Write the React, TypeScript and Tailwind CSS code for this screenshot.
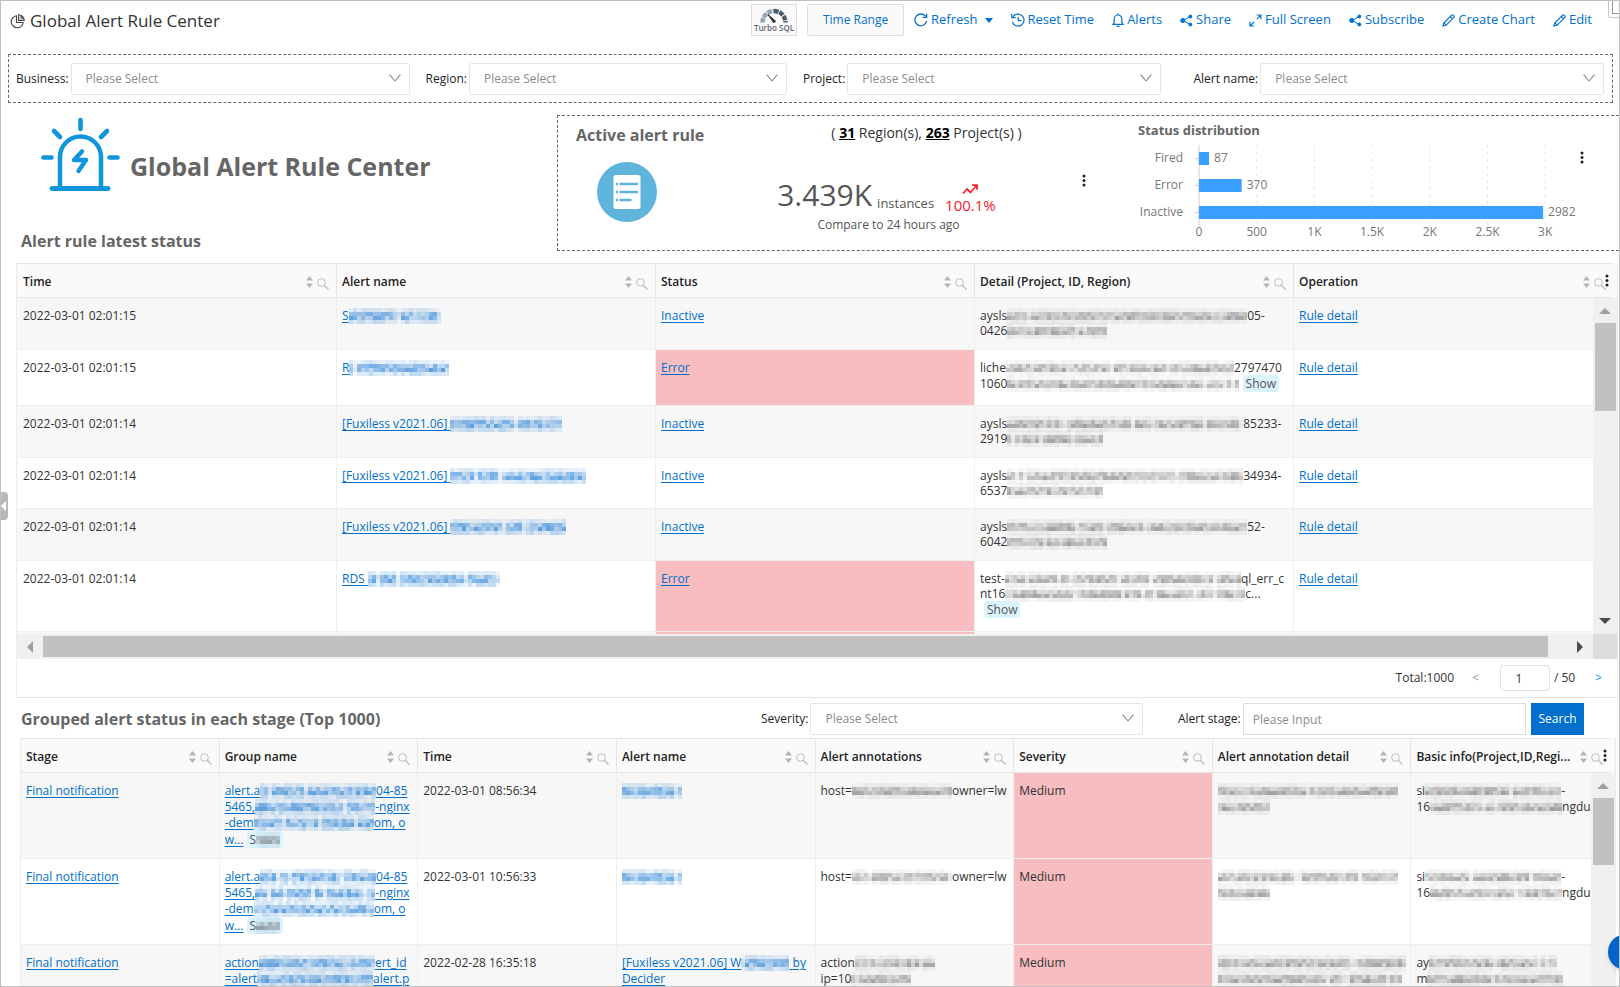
import { useState, type ReactNode } from "react";

type Tone = "blue" | "gray";

/* Masked text: a small grid of 4px cells, darker around the x-height */
function Masked({ w, tone = "gray", seed = 1 }: { w: number; tone?: Tone; seed?: number }) {
  const cols = Math.round(w / 4);
  const bands = tone === "blue" ? [0.14, 0.42, 0.5, 0.2] : [0.06, 0.28, 0.36, 0.07];
  const fill = tone === "blue" ? "#1677d2" : "#4a4a4a";
  let state = seed * 7919 + 17;
  const next = () => {
    state = (state * 1103515245 + 12345) % 2147483648;
    return state / 2147483648;
  };
  const cells: ReactNode[] = [];
  for (let x = 0; x < cols; x++) {
    const gap = next() < 0.06 ? 0.4 : 1;
    for (let y = 0; y < 4; y++) {
      const opacity = bands[y] * gap * (0.5 + next() * 0.9);
      cells.push(
        <rect key={`${x}-${y}`} x={x * 4} y={y * 4} width={4} height={4} fill={fill} opacity={opacity.toFixed(2)} />,
      );
    }
  }
  return (
    <svg
      className="inline-block align-baseline -mb-1 max-w-none"
      width={cols * 4}
      height={16}
      shapeRendering="crispEdges"
      aria-hidden="true"
    >
      {cells}
    </svg>
  );
}

function Link({ children }: { children: ReactNode }) {
  return (
    <a href="#" className="text-[#0070cc] underline underline-offset-2">
      {children}
    </a>
  );
}

function Show({ children = "Show" }: { children?: ReactNode }) {
  return (
    <button className="inline-block h-[17px] px-[3px] leading-[17px] rounded-sm bg-[#dbf2ff] text-[#555]">
      {children}
    </button>
  );
}

function SortIcon() {
  return (
    <svg width="7" height="12" viewBox="0 0 7 12" fill="#b3b3b3">
      <path d="M3.5 0 7 4.5H0zM3.5 12 7 7.5H0z" />
    </svg>
  );
}

function SearchIcon() {
  return (
    <svg width="12" height="12" viewBox="0 0 12 12" fill="none" stroke="#bdbdbd" className="mt-1">
      <circle cx="4.5" cy="4.5" r="3.8" />
      <path d="M7.3 7.3 11.5 11.5" strokeWidth="1.3" />
    </svg>
  );
}

function Dots() {
  return (
    <svg width="4" height="13" viewBox="0 0 4 13" fill="#222">
      <circle cx="2" cy="2" r="1.5" />
      <circle cx="2" cy="6.5" r="1.5" />
      <circle cx="2" cy="11" r="1.5" />
    </svg>
  );
}

function Triangle({ dir, dark }: { dir: "up" | "down" | "left" | "right"; dark?: boolean }) {
  const paths = {
    up: "M6 3 12 9H0z",
    down: "M6 9 0 3h12z",
    left: "M3 6 9 0v12z",
    right: "M9 6 3 0v12z",
  };
  return (
    <svg width="12" height="12" viewBox="0 0 12 12" fill={dark ? "#4a4a4a" : "#a0a0a0"}>
      <path d={paths[dir]} />
    </svg>
  );
}

function SelectBox({ id, label }: { id: string; label: string }) {
  return (
    <>
      <label htmlFor={id} className="whitespace-nowrap text-[#222]">
        {label}:
      </label>
      <div className="relative flex-1 ml-[2px]">
        <select
          id={id}
          className="w-full h-8 pl-[14px] pr-8 appearance-none border border-[#e6e6e6] rounded-xs bg-white text-[#8c8c8c] outline-none"
        >
          <option>Please Select</option>
        </select>
        <svg
          className="absolute right-[9px] top-[11px] pointer-events-none"
          width="12"
          height="8"
          viewBox="0 0 12 8"
          fill="none"
          stroke="#888"
          strokeWidth="1.1"
        >
          <path d="M.6.6 6 7 11.4.6" />
        </svg>
      </div>
    </>
  );
}

function HeaderCell({ title, last }: { title: string; last?: boolean }) {
  return (
    <th
      className={`h-[35px] pt-0.5 pl-[5px] pr-[7px] text-left font-semibold text-[#222] border-y border-[#e5e5e5] ${last ? "" : "border-r"}`}
    >
      <div className="flex items-center gap-1">
        <span className="flex-1 whitespace-nowrap">{title}</span>
        <SortIcon />
        <SearchIcon />
      </div>
    </th>
  );
}

const cell = "pt-2.5 pl-[5px] align-top border-b border-r border-[#efefef] whitespace-nowrap";

/* Toolbar icons */
const RefreshIcon = (
  <svg width="14" height="14" viewBox="0 0 14 14" fill="none" stroke="#0070cc" strokeWidth="1.3">
    <path d="M12.6 8.2A5.9 5.9 0 1 1 11.6 3.4" />
    <path d="M12.6.8v3.6H8.8" />
  </svg>
);
const ResetIcon = (
  <svg width="14" height="14" viewBox="0 0 14 14" fill="none" stroke="#0070cc" strokeWidth="1.2">
    <path d="M1.6 4.6A6 6 0 1 1 1.4 9" />
    <path d="M.8.8v3.9h3.9M7.2 3.8v3.8h3.2" />
  </svg>
);
const BellIcon = (
  <svg width="12" height="14" viewBox="0 0 12 14" fill="none" stroke="#0070cc" strokeWidth="1.2">
    <path d="M1 11.4h10L9.8 9.6V5.8a3.8 3.8 0 0 0-7.6 0v3.8zM4.5 13.3h3M6 .2v1.8" />
  </svg>
);
const ShareIcon = (
  <svg width="13" height="13" viewBox="0 0 13 13" fill="#0070cc" stroke="#0070cc">
    <path d="M10.2 2.6 3 6.5l7.2 3.9" fill="none" />
    <circle cx="2.8" cy="6.5" r="2.1" />
    <circle cx="10.3" cy="2.5" r="1.5" />
    <circle cx="10.3" cy="10.5" r="1.5" />
  </svg>
);
const FullIcon = (
  <svg width="13" height="13" viewBox="0 0 13 13" fill="none" stroke="#0070cc" strokeWidth="1.2">
    <path d="M7.6 1h4.3v4.3M11.9 1 7.8 5.1M5.3 12H1V7.7M1 12l4.1-4.1" />
  </svg>
);
const PencilIcon = (
  <svg width="13" height="13" viewBox="0 0 13 13" fill="none" stroke="#0070cc" strokeWidth="1.1">
    <path d="M.9 12.1 1.7 9 9.6 1.1a1 1 0 0 1 1.4 0l.9.9a1 1 0 0 1 0 1.4L4 11.3zM8.2 2.5l2.3 2.3M2 8.8l2.2 2.3" />
  </svg>
);

const toolbar = [
  { name: "Reset Time", icon: ResetIcon },
  { name: "Alerts", icon: BellIcon },
  { name: "Share", icon: ShareIcon },
  { name: "Full Screen", icon: FullIcon },
  { name: "Subscribe", icon: ShareIcon },
  { name: "Create Chart", icon: PencilIcon },
  { name: "Edit", icon: PencilIcon },
];

function Header() {
  return (
    <header className="flex items-start h-[53px] pt-[3px] pl-[9px] pr-[27px]">
      <h1 className="flex flex-1 items-center h-[34px] gap-[5px] text-[17px] text-[#333]">
        <svg width="15" height="15" viewBox="0 0 15 15" fill="none" stroke="#444" strokeWidth="1.1">
          <path d="M6.5 1.8A6 6 0 1 0 13.2 8.5H6.5z" />
          <path d="M8.6.8v5.6h5.6A5.6 5.6 0 0 0 8.6.8zM11 1.5v2.6h2.6" />
        </svg>
        Global Alert Rule Center
      </h1>
      <div className="flex items-start text-[13px] text-[#0070cc]">
        <button
          aria-label="Turbo SQL"
          className="flex flex-col items-center w-[46px] h-8 pt-[3px] border border-[#ddd] bg-[#fafafa]"
        >
          <svg width="28" height="15" viewBox="0 0 28 15" fill="none">
            <path d="M2.5 14.5a11.5 11.5 0 0 1 11.500-11.500" stroke="#8fa0ae" strokeWidth="4.4" strokeDasharray="4.6 .9" />
            <path d="M14 3a11.5 11.5 0 0 1 11.500 11.500" stroke="#4b5b69" strokeWidth="4.4" strokeDasharray="4.6 .9" />
            <path d="M8 6.5 13.6 14.8l2-1.6z" fill="#333" stroke="#333" />
          </svg>
          <span className="text-[8px] leading-[9px] font-semibold text-[#667]">Turbo SQL</span>
        </button>
        <button className="w-[97px] h-8 ml-2.5 text-xs border border-[#ddd] rounded-xs bg-[#fafafa]">Time Range</button>
        <button className="flex items-center h-8 gap-[3px] ml-2.5">
          {RefreshIcon}
          Refresh
          <svg className="ml-1" width="8" height="5" viewBox="0 0 8 5" fill="#0070cc">
            <path d="M0 0h8L4 5z" />
          </svg>
        </button>
        <nav className="flex gap-[18px] ml-[18px]">
          {toolbar.map((item) => (
            <button key={item.name} className="flex items-center h-8 gap-[3px] whitespace-nowrap">
              {item.icon}
              {item.name}
            </button>
          ))}
        </nav>
      </div>
    </header>
  );
}

function Filters() {
  return (
    <section className="flex items-center h-[49px] ml-[7px] mr-[6px] pl-[7px] pr-2 gap-4 border border-dashed border-[#666]">
      <div className="flex items-center flex-[393]">
        <SelectBox id="business" label="Business" />
      </div>
      <div className="flex items-center flex-[361]">
        <SelectBox id="region" label="Region" />
      </div>
      <div className="flex items-center flex-[358]">
        <SelectBox id="project" label="Project" />
      </div>
      <div className="flex items-center flex-[410] ml-4">
        <SelectBox id="alert-name" label="Alert name" />
      </div>
    </section>
  );
}

const distribution = [
  { name: "Fired", value: 87 },
  { name: "Error", value: 370 },
  { name: "Inactive", value: 2982 },
];
const ticks = ["0", "500", "1K", "1.5K", "2K", "2.5K", "3K"];

function StatusChart() {
  return (
    <svg className="mt-[2px]" width="440" height="100" viewBox="0 0 440 100" fontSize="12" fill="#777">
      {ticks.map((tick, i) => (
        <g key={tick}>
          <line
            x1={61 + i * 57.7}
            x2={61 + i * 57.7}
            y1="4"
            y2="84"
            stroke={i === 0 ? "#d0d0d0" : "#e6e6e6"}
            strokeDasharray={i === 0 ? undefined : "3 4"}
          />
          <text x={61 + i * 57.7} y="95" textAnchor="middle">
            {tick}
          </text>
        </g>
      ))}
      {distribution.map((row, i) => {
        const width = (row.value / 500) * 57.7;
        return (
          <g key={row.name}>
            <text x="45" y={21 + i * 27} textAnchor="end">
              {row.name}
            </text>
            <line x1="57" x2="61" y1={17.5 + i * 27} y2={17.5 + i * 27} stroke="#ccc" />
            <rect x="61" y={11 + i * 27} width={width} height="13" fill="#3aa0ff" />
            <text x={66 + width} y={21 + i * 27}>
              {row.value}
            </text>
          </g>
        );
      })}
    </svg>
  );
}

function Overview() {
  return (
    <section className="flex h-[136px] mt-3">
      <div className="flex flex-col justify-between shrink-0 w-[556px] pl-5">
        <div className="flex items-end gap-2.5 pl-5 pt-[2px]">
          <svg width="79" height="74" viewBox="0 0 79 74" fill="none" stroke="#1296db" strokeLinecap="round">
            <path d="M19 71V40a20.500 20.500 0 0 1 41 0v31" strokeWidth="4.500" />
            <path d="M11 71.500h56" strokeWidth="4.800" />
            <path d="M39.500 3v9M13 14l6 6M66 14l-6 6M2.500 40.500h8M68.500 40.500h8" strokeWidth="4.600" />
            <path d="M41 34.500 33 43h12l-7.500 11" strokeWidth="4.500" strokeLinejoin="round" />
          </svg>
          <h2 className="pb-2 text-[25px] font-bold text-[#666] whitespace-nowrap">Global Alert Rule Center</h2>
        </div>
        <h3 className="text-base leading-5 font-bold text-[#666]">Alert rule latest status</h3>
      </div>

      <div className="flex flex-1 border border-r-0 border-dashed border-[#666]">
        <div className="w-[212px] pl-[18px] pt-[7px]">
          <h3 className="text-base font-bold text-[#666]">Active alert rule</h3>
          <svg className="mt-[15px] ml-[21px]" width="60" height="60" viewBox="0 0 60 60">
            <circle cx="30" cy="30" r="30" fill="#5fb4dc" />
            <rect x="16.500" y="13" width="27" height="34" rx="2.500" fill="#fff" />
            <path d="M22.500 22H41M22.500 30H41M22.500 38H34.500" stroke="#5fb4dc" strokeWidth="2.600" />
            <path d="M19 22h2M19 30h2M19 38h2" stroke="#5fb4dc" strokeWidth="2.600" />
          </svg>
        </div>
        <div className="flex flex-col items-center w-[233px] text-[#555]">
          <p className="ml-20 mt-[7px] text-sm text-[#333] whitespace-nowrap">
            ( <b className="text-black underline">31</b> Region(s), <b className="text-black underline">263</b>{" "}
            Project(s) )
          </p>
          <div className="flex items-end gap-[5px] mt-8 whitespace-nowrap">
            <span className="text-3xl leading-10">3.439K</span>
            <span className="pb-[3px] text-[13px]">instances</span>
            <span className="flex flex-col items-center pl-1.5 text-[#f5222d] text-[15px] leading-5">
              <svg width="16" height="11" viewBox="0 0 16 11" fill="none" stroke="#f5222d" strokeWidth="1.800">
                <path d="M1 9.500 5 5l3.500 3.500L14.500 1.500M10 1.200h5v4.500" />
              </svg>
              100.1%
            </span>
          </div>
          <p className="pl-1 pt-0.5">Compare to 24 hours ago</p>
        </div>
        <div className="pt-[58px] pl-[79px]">
          <Dots />
        </div>
        <div className="flex-1 pl-[52px] pt-[6px]">
          <h3 className="text-[13px] font-bold text-[#666]">Status distribution</h3>
          <StatusChart />
        </div>
        <div className="pt-[35px] pr-[35px]">
          <Dots />
        </div>
      </div>
    </section>
  );
}

const alertRows = [
  {
    time: "2022-03-01 02:01:15",
    h: "h-[52px]",
    name: <>S<Masked w={92} tone="blue" seed={3} /></>,
    status: "Inactive",
    detail: <>aysls<Masked w={240} seed={11} />05-<br />0426<Masked w={100} seed={12} /></>,
  },
  {
    time: "2022-03-01 02:01:15",
    h: "h-[56px]",
    name: <>R<Masked w={100} tone="blue" seed={4} /></>,
    status: "Error",
    detail: <>liche<Masked w={228} seed={13} />2797470<br />1060<Masked w={232} seed={14} /> <Show /></>,
  },
  {
    time: "2022-03-01 02:01:14",
    h: "h-[52px]",
    name: <>[Fuxiless v2021.06] <Masked w={112} tone="blue" seed={5} /></>,
    status: "Inactive",
    detail: <>aysls<Masked w={236} seed={15} />85233-<br />2919<Masked w={96} seed={16} /></>,
  },
  {
    time: "2022-03-01 02:01:14",
    h: "h-[51px]",
    name: <>[Fuxiless v2021.06] <Masked w={136} tone="blue" seed={6} /></>,
    status: "Inactive",
    detail: <>aysls<Masked w={236} seed={17} />34934-<br />6537<Masked w={96} seed={18} /></>,
  },
  {
    time: "2022-03-01 02:01:14",
    h: "h-[52px]",
    name: <>[Fuxiless v2021.06] <Masked w={116} tone="blue" seed={7} /></>,
    status: "Inactive",
    detail: <>aysls<Masked w={240} seed={19} />52-<br />6042<Masked w={100} seed={20} /></>,
  },
  {
    time: "2022-03-01 02:01:14",
    h: "h-[71px]",
    name: <>RDS <Masked w={132} tone="blue" seed={8} /></>,
    status: "Error",
    detail: <>test-<Masked w={236} seed={21} />ql_err_c<br />nt16<Masked w={240} seed={22} />c...<br /><span className="pl-1"><Show /></span></>,
  },
];

function AlertTable() {
  const [page, setPage] = useState("1");

  return (
    <section className="mt-3 ml-[15px] mr-px border-x border-[#ececec]">
      <div className="relative h-[371px] overflow-hidden bg-[#fafafa]">
        <div className="ml-px mr-[4px]">
          <table className="w-full table-fixed border-separate border-spacing-0 leading-[15px]">
            <thead>
              <tr>
                <HeaderCell title="Time" />
                <HeaderCell title="Alert name" />
                <HeaderCell title="Status" />
                <HeaderCell title="Detail (Project, ID, Region)" />
                <HeaderCell title="Operation" last />
              </tr>
            </thead>
            <tbody>
              {alertRows.map((row, i) => (
                <tr key={i} className={`${row.h} ${i % 2 === 0 ? "bg-[#f7f7f7]" : "bg-white"}`}>
                  <td className={cell}>{row.time}</td>
                  <td className={cell}>
                    <Link>{row.name}</Link>
                  </td>
                  <td className={`${cell} ${row.status === "Error" ? "bg-[#f7bdc1]" : ""}`}>
                    <Link>{row.status}</Link>
                  </td>
                  <td className={cell}>{row.detail}</td>
                  <td className={cell}>
                    <Link>Rule detail</Link>
                  </td>
                </tr>
              ))}
              <tr className="h-[52px] bg-[#f7f7f7]">
                <td className={cell} />
                <td className={cell} />
                <td className={`${cell} bg-[#f7bdc1]`} />
                <td className={cell} />
                <td className={cell} />
              </tr>
            </tbody>
          </table>
        </div>
        <div className="absolute right-[8px] top-[11px]">
          <Dots />
        </div>
        {/* Vertical scrollbar */}
        <div className="absolute right-0 top-[35px] bottom-0 flex flex-col items-center w-6 py-[7px] bg-[#f0f0f0]">
          <Triangle dir="up" />
          <div className="w-[21px] h-[88px] mt-[6px] mb-auto bg-[#c1c1c1]" />
          <Triangle dir="down" dark />
        </div>
      </div>
      {/* Horizontal scrollbar */}
      <div className="flex h-[25px] bg-[#f0f0f0]">
        <div className="flex items-center flex-1 pl-[7px] pr-[7px]">
          <Triangle dir="left" />
          <div className="flex-1 h-[21px] ml-[7px] mr-[26px] bg-[#c1c1c1]" />
          <Triangle dir="right" dark />
        </div>
        <div className="w-6 bg-[#dcdcdc]" />
      </div>
      <div className="flex items-center justify-end h-[39px] pr-[15px] border-b border-[#e5e5e5]">
        <span>Total:1000</span>
        <button className="ml-[18px] text-[#999]" aria-label="Previous page">
          &lt;
        </button>
        <input
          aria-label="Page"
          value={page}
          onChange={(e) => setPage(e.target.value)}
          className="w-[50px] h-[26px] ml-[21px] pr-3 text-center border border-[#e0e0e0] rounded-sm outline-none"
        />
        <span className="ml-1">/ 50</span>
        <button className="ml-5 text-[#1890ff]" aria-label="Next page">
          &gt;
        </button>
      </div>
    </section>
  );
}

function GroupName({ seed }: { seed: number }) {
  return (
    <>
      <Link>
        alert.a<Masked w={116} tone="blue" seed={seed} />04-85
        <br />
        5465,<Masked w={120} tone="blue" seed={seed + 1} />-nginx
        <br />
        -dem<Masked w={120} tone="blue" seed={seed + 2} />om, o
        <br />
        w...
      </Link>{" "}
      <Show>
        S<Masked w={24} seed={seed + 3} />
      </Show>
    </>
  );
}

const groupRows = [
  {
    time: "2022-03-01 08:56:34",
    group: <GroupName seed={31} />,
    name: <Masked w={60} tone="blue" seed={36} />,
    annotations: <>host=<Masked w={100} seed={37} />owner=lw</>,
    detail: <><Masked w={180} seed={38} /><br /><Masked w={52} seed={39} /></>,
    info: <>si<Masked w={136} seed={40} />-<br />16<Masked w={132} seed={41} />ngdu</>,
  },
  {
    time: "2022-03-01 10:56:33",
    group: <GroupName seed={51} />,
    name: <Masked w={60} tone="blue" seed={36} />,
    annotations: <>host=<Masked w={100} seed={57} />owner=lw</>,
    detail: <><Masked w={180} seed={58} /><br /><Masked w={52} seed={59} /></>,
    info: <>si<Masked w={136} seed={60} />-<br />16<Masked w={132} seed={61} />ngdu</>,
  },
  {
    time: "2022-02-28 16:35:18",
    group: <Link>action<Masked w={116} tone="blue" seed={71} />ert_id<br />=alert<Masked w={116} tone="blue" seed={72} />alert.p</Link>,
    name: <Link>[Fuxiless v2021.06] W<Masked w={48} tone="blue" seed={73} /> by<br />Decider</Link>,
    annotations: <>action<Masked w={80} seed={74} /><br />ip=10<Masked w={60} seed={75} /></>,
    detail: <><Masked w={188} seed={76} /><br /><Masked w={184} seed={77} /></>,
    info: <>ay<Masked w={128} seed={78} /><br />m<Masked w={136} seed={79} /></>,
  },
];

function GroupTable() {
  return (
    <section className="relative flex-1 min-h-0 ml-[19px] mr-[3px] overflow-hidden border-x border-[#ececec] bg-[#fafafa]">
      <div className="mr-[5px]">
        <table className="w-full table-fixed border-separate border-spacing-0 leading-4">
          <thead>
            <tr>
              <HeaderCell title="Stage" />
              <HeaderCell title="Group name" />
              <HeaderCell title="Time" />
              <HeaderCell title="Alert name" />
              <HeaderCell title="Alert annotations" />
              <HeaderCell title="Severity" />
              <HeaderCell title="Alert annotation detail" />
              <HeaderCell title="Basic info(Project,ID,Regi..." last />
            </tr>
          </thead>
          <tbody>
            {groupRows.map((row, i) => (
              <tr key={i} className={`h-[86px] ${i % 2 === 0 ? "bg-[#f7f7f7]" : "bg-white"}`}>
                <td className={cell}>
                  <Link>Final notification</Link>
                </td>
                <td className={cell}>{row.group}</td>
                <td className={cell}>{row.time}</td>
                <td className={cell}>{row.name}</td>
                <td className={cell}>{row.annotations}</td>
                <td className={`${cell} bg-[#f7bdc1]`}>Medium</td>
                <td className={cell}>{row.detail}</td>
                <td className={cell}>{row.info}</td>
              </tr>
            ))}
          </tbody>
        </table>
      </div>
      <div className="absolute right-2 top-[11px]">
        <Dots />
      </div>
      <div className="absolute right-0 top-[35px] bottom-0 flex flex-col items-center w-6 py-[7px] bg-[#f0f0f0]">
        <Triangle dir="up" />
        <div className="w-[21px] h-[67px] mt-[6px] bg-[#c1c1c1]" />
      </div>
    </section>
  );
}

export default function App() {
  return (
    <div className="relative flex flex-col h-screen overflow-hidden border border-[#c0c0c0] bg-white text-xs text-[#333] font-['Open_Sans','Noto_Sans',sans-serif]">
      <Header />
      <Filters />
      <Overview />
      <AlertTable />

      <div className="flex items-center shrink-0 h-10 pt-0.5 pl-5 pr-[35px]">
        <h3 className="flex-1 text-base font-bold text-[#666]">Grouped alert status in each stage (Top 1000)</h3>
        <div className="flex items-center w-[382px]">
          <SelectBox id="severity" label="Severity" />
        </div>
        <div className="flex items-center w-[348px] ml-[35px]">
          <label htmlFor="stage" className="whitespace-nowrap text-[#222]">
            Alert stage:
          </label>
          <input
            id="stage"
            placeholder="Please Input"
            className="flex-1 min-w-0 h-8 ml-[2px] px-[9px] border border-[#ddd] placeholder:text-[#8c8c8c] outline-none"
          />
        </div>
        <button className="w-[53px] h-8 ml-[5px] bg-[#0070cc] text-white">Search</button>
      </div>

      <GroupTable />

      {/* Sidebar handle */}
      <button
        aria-label="Expand sidebar"
        className="absolute left-0 top-[491px] flex items-center w-[7px] h-7 rounded-r-sm bg-[#b8b8b8]"
      >
        <svg width="5" height="10" viewBox="0 0 5 10" fill="#fff">
          <path d="M5 0v10L0 5z" />
        </svg>
      </button>
      {/* Window corner */}
      <div className="absolute -right-px -top-px w-3 h-[18px] pl-[3px] pb-[3px] border-l border-b border-[#c8c8c8] rounded-bl-xs">
        <div className="w-full h-full border-l border-b border-[#999]" />
      </div>
      {/* Help bubble */}
      <button
        aria-label="Help"
        className="absolute -right-[25px] bottom-[16px] size-9 rounded-full bg-[#0064c8] shadow-md"
      />
    </div>
  );
}
